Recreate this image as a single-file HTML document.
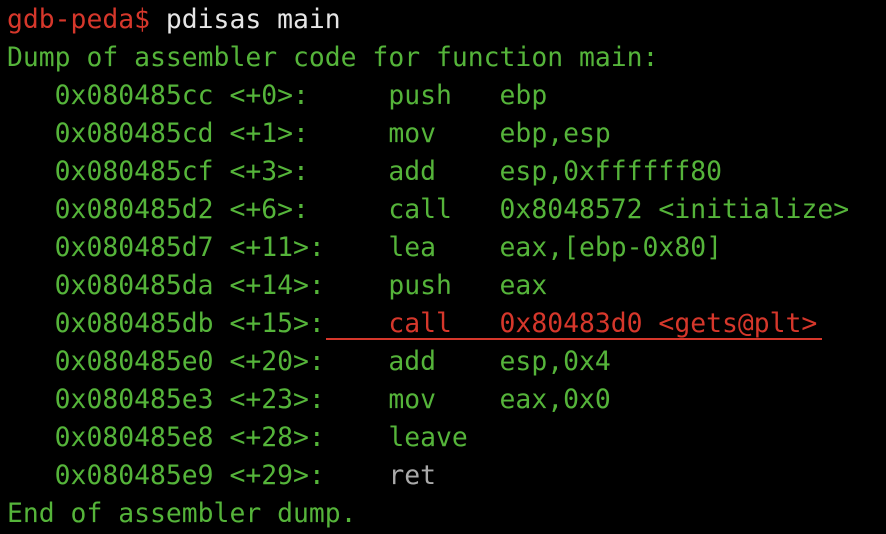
<!DOCTYPE html>
<html><head><style>
html,body{margin:0;padding:0;background:#000;width:886px;height:534px;overflow:hidden}
pre{margin:0;padding:1px 0 0 7px;font-family:"DejaVu Sans Mono","Liberation Mono",monospace;font-size:26.4px;line-height:38px;color:#55b43a;white-space:pre;position:relative}
.r{color:#d6372b}.w{color:#e6e6e6}.g{color:#aaaaaa}
.u{position:absolute;left:326px;top:338px;width:496px;height:2px;background:#d6372b}
</style></head><body>
<pre><span class="r">gdb-peda$ </span><span class="w">pdisas main</span>
Dump of assembler code for function main:
   0x080485cc &lt;+0&gt;:     push   ebp
   0x080485cd &lt;+1&gt;:     mov    ebp,esp
   0x080485cf &lt;+3&gt;:     add    esp,0xffffff80
   0x080485d2 &lt;+6&gt;:     call   0x8048572 &lt;initialize&gt;
   0x080485d7 &lt;+11&gt;:    lea    eax,[ebp-0x80]
   0x080485da &lt;+14&gt;:    push   eax
   0x080485db &lt;+15&gt;:    <span class="r">call   0x80483d0 &lt;gets@plt&gt;</span>
   0x080485e0 &lt;+20&gt;:    add    esp,0x4
   0x080485e3 &lt;+23&gt;:    mov    eax,0x0
   0x080485e8 &lt;+28&gt;:    leave
   0x080485e9 &lt;+29&gt;:    <span class="g">ret</span>
End of assembler dump.<div class="u"></div></pre>
</body></html>
